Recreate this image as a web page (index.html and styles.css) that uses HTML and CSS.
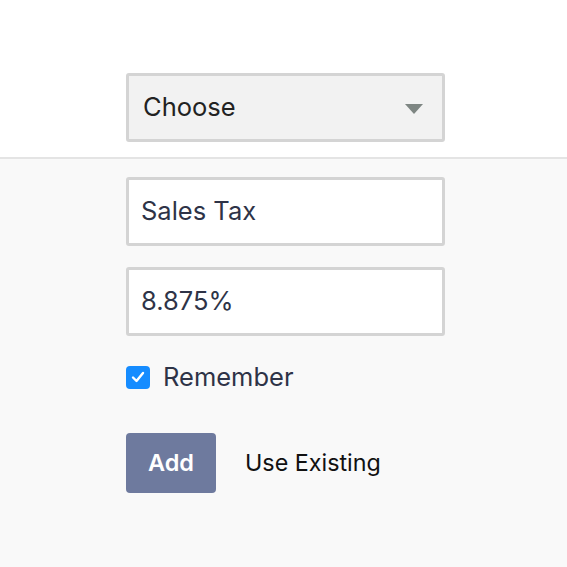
FILE: index.html
```html
<!DOCTYPE html>
<html>
<head>
<meta charset="utf-8">
<link rel="stylesheet" href="styles.css">
</head>
<body>
<div class="top">
  <div class="select">
    <span class="select-label">Choose</span>
    <svg class="caret" width="18" height="10" viewBox="0 0 18 10"><polygon points="0,0 18,0 9,10" fill="#7e8683"/></svg>
  </div>
</div>
<div class="bottom">
  <div class="field">Sales Tax</div>
  <div class="field">8.875%</div>
  <label class="check-row">
    <span class="checkbox">
      <svg width="14" height="12" viewBox="0 0 14 12"><path d="M2 6.5 L5.5 10 L12 2" fill="none" stroke="#fff" stroke-width="2.4" stroke-linecap="round" stroke-linejoin="round"/></svg>
    </span>
    <span class="check-label">Remember</span>
  </label>
  <div class="actions">
    <button class="btn-add">Add</button>
    <span class="link">Use Existing</span>
  </div>
</div>
</body>
</html>
```
FILE: styles.css
```css
html, body {
  margin: 0;
  padding: 0;
  height: 100%;
}
body {
  font-family: Inter, Lato, "Noto Sans", sans-serif;
  background: #f9f9f9;
}
.top {
  background: #ffffff;
  height: 159px;
  box-sizing: border-box;
  padding: 73px 0 0 126px;
  border-bottom: 2px solid #e4e4e4;
}
.select {
  width: 319px;
  height: 69px;
  box-sizing: border-box;
  border: 3px solid #d4d4d4;
  border-radius: 3px;
  background: #f2f2f2;
  display: flex;
  align-items: center;
  justify-content: space-between;
  padding: 0 19px 0 14px;
}
.select-label {
  font-size: 25.5px;
  color: #222222;
  padding-bottom: 3px;
}
.caret {
  display: block;
  margin-top: 2px;
}
.bottom {
  padding: 18px 0 0 126px;
}
.field {
  width: 319px;
  height: 69px;
  box-sizing: border-box;
  border: 3px solid #d4d4d4;
  border-radius: 3px;
  background: #ffffff;
  display: flex;
  align-items: center;
  padding: 0 12px 2px;
  font-size: 25.5px;
  color: #2e3347;
  margin-bottom: 21px;
}
.check-row {
  display: flex;
  align-items: center;
  margin-top: 29px;
  height: 24px;
}
.checkbox {
  width: 24px;
  height: 23px;
  border-radius: 4px;
  background: #168cff;
  display: flex;
  align-items: center;
  justify-content: center;
}
.checkbox svg {
  display: block;
}
.check-label {
  margin-left: 13px;
  font-size: 25.5px;
  color: #2e3347;
  padding-bottom: 2px;
}
.actions {
  display: flex;
  align-items: center;
  margin-top: 44px;
}
.btn-add {
  width: 90px;
  height: 60px;
  border: none;
  border-radius: 4px;
  background: #6e7a9e;
  color: #ffffff;
  font-family: inherit;
  font-size: 23.5px;
  font-weight: 600;
  padding: 0 0 2px;
}
.link {
  margin-left: 29px;
  font-size: 23.3px;
  color: #111111;
  padding-bottom: 2px;
}
```
